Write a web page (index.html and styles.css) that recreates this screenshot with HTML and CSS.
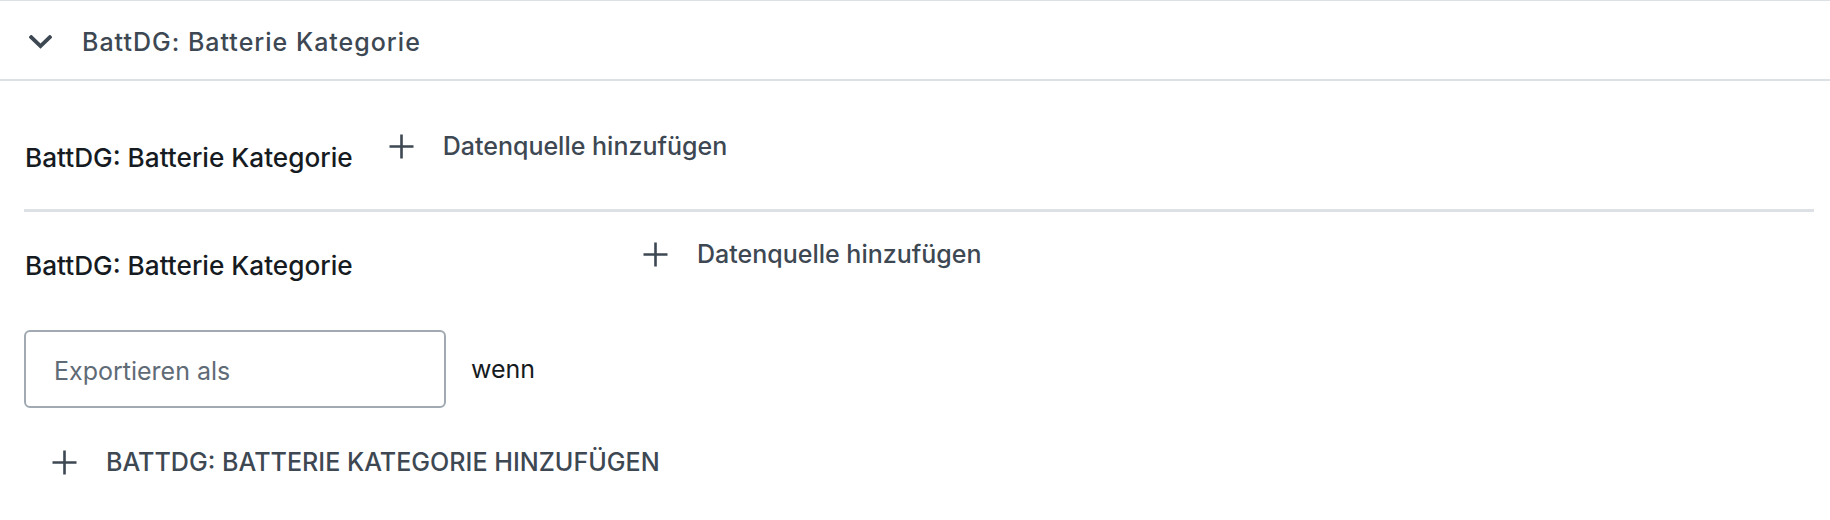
FILE: index.html
```html
<!DOCTYPE html>
<html lang="de">
<head>
<meta charset="utf-8">
<title>BattDG: Batterie Kategorie</title>
<link rel="stylesheet" href="styles.css">
</head>
<body>
<div class="panel">
  <div class="panel-header">
    <svg class="chevron" width="23" height="14" viewBox="0 0 23 14"><path d="M2.2 2.2 L11.5 11.2 L20.8 2.2" fill="none" stroke="#3d4853" stroke-width="3.8" stroke-linecap="square"/></svg>
    <span class="panel-title">BattDG: Batterie Kategorie</span>
  </div>
  <div class="panel-body">
    <div class="row row-first">
      <div class="row-label">BattDG: Batterie Kategorie</div>
      <button class="add-btn add-btn-first">
        <svg class="plus" width="25" height="25" viewBox="0 0 25 25"><path d="M12.5 0.5 V24.5 M0.5 12.5 H24.5" stroke="#3d4853" stroke-width="2.6"/></svg>
        <span>Datenquelle hinzufügen</span>
      </button>
    </div>
    <div class="divider"></div>
    <div class="row row-second">
      <div class="row-label label-wide">BattDG: Batterie Kategorie</div>
      <button class="add-btn">
        <svg class="plus" width="25" height="25" viewBox="0 0 25 25"><path d="M12.5 0.5 V24.5 M0.5 12.5 H24.5" stroke="#3d4853" stroke-width="2.6"/></svg>
        <span>Datenquelle hinzufügen</span>
      </button>
    </div>
    <div class="export-row">
      <div class="export-input">Exportieren als</div>
      <span class="wenn">wenn</span>
    </div>
    <button class="add-btn add-category">
      <svg class="plus" width="25" height="25" viewBox="0 0 25 25"><path d="M12.5 0.5 V24.5 M0.5 12.5 H24.5" stroke="#3d4853" stroke-width="2.6"/></svg>
      <span>BattDG: Batterie Kategorie hinzufügen</span>
    </button>
  </div>
</div>
</body>
</html>
```
FILE: styles.css
```css
html, body {
  margin: 0;
  padding: 0;
  background: #ffffff;
}
body {
  font-family: Inter, "Noto Sans", "Liberation Sans", sans-serif;
  font-size: 25px;
  color: #161b22;
}
.panel {
  border-top: 1px solid #dde1e6;
}
.panel-header {
  height: 74px;
  padding-top: 4px;
  display: flex;
  align-items: center;
  padding-left: 29px;
  border-bottom: 2px solid #dde1e6;
}
.chevron {
  display: block;
  margin-right: 30px;
}
.panel-title {
  font-size: 25px;
  font-weight: 500;
  letter-spacing: 1px;
  color: #3d4853;
}
.panel-body {
  padding: 0 16px 40px 24px;
}
.row {
  display: flex;
  align-items: flex-start;
}
.row-first {
  padding-top: 40px;
  padding-bottom: 36px;
}
.row-second {
  padding-top: 17px;
}
.row-label {
  margin-top: 22px;
  line-height: 30px;
  font-weight: 500;
  font-size: 26.2px;
  color: #161b22;
  white-space: nowrap;
  padding-left: 1px;
}
.label-wide {
  width: 618px;
}
.add-btn {
  display: flex;
  align-items: center;
  gap: 29px;
  height: 50px;
  padding: 0;
  border: 0;
  background: transparent;
  font-family: inherit;
  font-size: 25px;
  font-weight: 500;
  color: #3d4853;
  cursor: pointer;
}
.add-btn-first {
  margin-left: 36px;
}
.plus {
  display: block;
}
.divider {
  height: 3px;
  background: #dde1e6;
}
.export-row {
  display: flex;
  align-items: center;
  gap: 25px;
  margin-top: 49px;
}
.export-input {
  box-sizing: border-box;
  width: 422px;
  height: 78px;
  border: 2px solid #a1aab2;
  border-radius: 6px;
  padding-left: 28px;
  padding-top: 3px;
  display: flex;
  align-items: center;
  color: #5f6b76;
  font-size: 25px;
}
.wenn {
  color: #161b22;
  font-size: 25px;
}
.add-category {
  margin-top: 29px;
  margin-left: 28px;
  text-transform: uppercase;
  font-size: 25.1px;
}
```
